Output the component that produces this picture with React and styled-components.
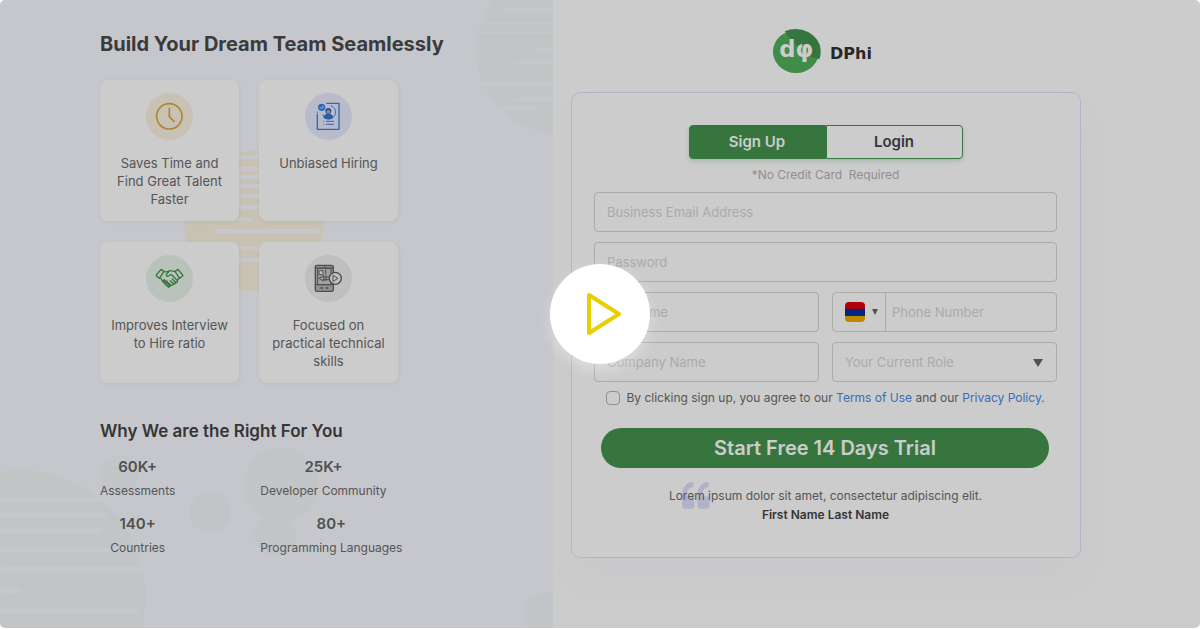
import React from 'react';
import styled, { createGlobalStyle } from 'styled-components';

const Global = createGlobalStyle`
  *, *::before, *::after { box-sizing: border-box; }
  body { margin: 0; background: #fff; font-family: Inter, "Liberation Sans", sans-serif; color: #555; }
  h1, h2, p, dl, dd, dt, ul, fieldset { margin: 0; padding: 0; border: 0; }
  button, input, select { font-family: inherit; margin: 0; }
`;

const Page = styled.div`
  position: relative;
  display: grid;
  grid-template-columns: minmax(0, 553fr) minmax(0, 647fr);
  min-height: calc(100vh - 1px);
  border-radius: 5px;
  overflow: hidden;
  background: #fff;
`;

const Intro = styled.section`
  position: relative;
  overflow: hidden;
  padding: 32px 20px 32px 100px;
  background: #f8f9ff;
`;

const Shapes = styled.svg`
  position: absolute;
  top: 0;
  left: 0;
  width: 553px;
  height: 100%;
`;

const IntroBody = styled.div`
  position: relative;
`;

const Title = styled.h1`
  font-size: 20px;
  line-height: 24px;
  font-weight: 700;
  color: #4a4a4a;
`;

const Subtitle = styled.h2`
  margin-top: 36px;
  font-size: 17px;
  line-height: 24px;
  font-weight: 600;
  color: #444;
`;

const Cards = styled.ul`
  display: grid;
  grid-template-columns: 139px 139px;
  gap: 21px 20px;
  margin-top: 24px;
  list-style: none;
`;

const Card = styled.li`
  display: flex;
  flex-direction: column;
  align-items: center;
  gap: 14px;
  min-height: 141px;
  padding: 13px 8px 12px;
  border-radius: 8px;
  background: #fff;
  box-shadow: 1px 1px 4px rgba(68, 148, 78, 0.1);
  font-size: 13px;
  line-height: 18px;
  text-align: center;
  color: #6c6c6c;
`;

const Badge = styled.svg`
  flex: none;
  width: 47px;
  height: 47px;
  border-radius: 50%;
  background: ${(p) => p.$tint};
`;

const Stats = styled.dl`
  display: grid;
  grid-template-columns: max-content max-content;
  gap: 14px 85px;
  margin-top: 14px;
`;

const Stat = styled.div`
  display: flex;
  flex-direction: column;
  align-items: center;
  justify-self: ${(p) => p.$align};
  gap: 5px;
`;

const StatValue = styled.dd`
  order: -1;
  font-size: 15px;
  line-height: 20px;
  font-weight: 600;
  color: #666;
`;

const StatLabel = styled.dt`
  font-size: 12px;
  line-height: 18px;
  color: #6c6c6c;
`;

const Join = styled.section`
  display: flex;
  flex-direction: column;
  align-items: stretch;
  gap: 18px;
  padding: 28px 119px 32px 18px;
`;

const Brand = styled.div`
  display: flex;
  align-items: center;
  justify-content: center;
  gap: 8px;
  padding-right: 7px;
  font-family: "DejaVu Sans", "Noto Sans", sans-serif;
  font-size: 16px;
  line-height: 24px;
  font-weight: 700;
  color: #333;
`;

const BrandName = styled.span`
  padding-top: 5px;
`;

const Form = styled.form`
  display: flex;
  flex-direction: column;
  align-items: stretch;
  padding: 32px 23px 32px 22px;
  min-height: 466px;
  border: 1px solid #e2e2fb;
  border-radius: 9px;
  box-shadow: 0 20px 40px rgba(120, 120, 220, 0.03);
`;

const Tabs = styled.div`
  display: flex;
  align-self: center;
  width: 274px;
  border-radius: 4px;
  box-shadow: 0 2px 4px rgba(68, 148, 78, 0.25);
`;

const Tab = styled.button`
  flex: 1;
  height: 34px;
  padding: 0;
  border: 1px solid #44944e;
  border-radius: ${(p) => (p.$active ? '4px 0 0 4px' : '0 4px 4px 0')};
  background: ${(p) => (p.$active ? '#44944e' : '#fff')};
  color: ${(p) => (p.$active ? '#fff' : '#444')};
  font-size: 15px;
  line-height: 20px;
  font-weight: 600;
`;

const Note = styled.p`
  margin: 7px 0 8px;
  font-size: 12px;
  line-height: 18px;
  text-align: center;
  white-space: pre;
  color: #b4b4b4;
`;

const Fields = styled.div`
  display: grid;
  grid-template-columns: 1fr 1fr;
  gap: 10px 13px;
`;

const Field = styled.label`
  display: flex;
  position: relative;
  grid-column: ${(p) => (p.$wide ? '1 / -1' : 'auto')};
  height: 40px;
  min-width: 0;
  border: 1px solid #d6d6d6;
  border-radius: 4px;
`;

const Input = styled.input`
  flex: 1;
  min-width: 0;
  padding: 0 ${(p) => (p.$tight ? '6px' : '12px')};
  border: 0;
  background: transparent;
  font-size: 13px;
  color: #444;
  outline: none;
  &::placeholder { color: #d6d6d6; opacity: 1; }
`;

const Select = styled.select`
  flex: 1;
  min-width: 0;
  padding: 0 12px;
  border: 0;
  appearance: none;
  background: transparent;
  font-size: 13px;
  color: #d6d6d6;
  outline: none;
`;

const Caret = styled.span`
  position: absolute;
  top: 16px;
  right: 13px;
  border: 5px solid transparent;
  border-top: 8px solid #666;
  border-bottom: 0;
  pointer-events: none;
`;

const Country = styled.button`
  display: flex;
  align-items: center;
  gap: 7px;
  width: 53px;
  padding: 0 7px 0 12px;
  border: 0;
  border-right: 1px solid #d6d6d6;
  background: transparent;
`;

const Consent = styled.label`
  display: flex;
  align-items: center;
  justify-content: center;
  gap: 6px;
  margin-top: 7px;
  font-size: 12px;
  line-height: 18px;
  color: #6c6c6c;
`;

const Check = styled.input`
  appearance: none;
  width: 14px;
  height: 14px;
  border: 1px solid #b4b4b4;
  border-radius: 4px;
`;

const Link = styled.a`
  color: #4a8ae8;
  text-decoration: none;
`;

const Submit = styled.button`
  height: 40px;
  margin: 21px 8px 0 7px;
  border: 0;
  border-radius: 20px;
  background: #44944e;
  color: #fff;
  font-size: 20px;
  line-height: 24px;
  font-weight: 600;
`;

const Quote = styled.figure`
  margin: 18px 0 0;
  text-align: center;
  font-size: 12px;
  line-height: 19px;
  color: #6c6c6c;
`;

const QuoteText = styled.blockquote`
  position: relative;
  z-index: 0;
  width: max-content;
  margin: 0 auto;
`;

const QuoteMark = styled.svg`
  position: absolute;
  top: -4px;
  left: 13px;
  width: 28px;
  height: 27px;
  z-index: -1;
`;

const Author = styled.figcaption`
  font-weight: 600;
  color: #444;
`;

const Overlay = styled.div`
  position: absolute;
  inset: 0;
  display: flex;
  align-items: center;
  justify-content: center;
  background: rgba(0, 0, 0, 0.2);
`;

const Play = styled.button`
  width: 100px;
  height: 100px;
  padding: 0;
  border: 0;
  border-radius: 50%;
  background: #fff;
  box-shadow: 0 6px 14px rgba(255, 255, 255, 0.35);
`;

const blobs = [
  { id: 'a', cx: 560, cy: 50, r: 84, fill: '#f2f7f7', lines: [[505, 8, 100, 4], [470, 22, 100, 3], [470, 32, 100, 2], [537, 48, 30, 5], [514, 61, 60, 4], [470, 82, 100, 4], [514, 97, 60, 4], [470, 107, 70, 3]] },
  { id: 'b', cx: 20, cy: 596, r: 126, fill: '#f2f7f7', lines: [[0, 497, 110, 5], [0, 512, 107, 6], [0, 528, 102, 6], [0, 548, 150, 5], [0, 566, 150, 6], [0, 588, 20, 6], [0, 608, 139, 6]] },
  { id: 'c', cx: 254, cy: 221, r: 70, fill: '#fbf3e2', lines: [[180, 155, 150, 4], [180, 167, 150, 4], [180, 175, 150, 4], [180, 184, 150, 4], [180, 194, 150, 4], [180, 205, 150, 4], [180, 218, 73, 3], [215, 229, 105, 4], [180, 247, 150, 3], [180, 258, 150, 4]] },
];

const dots = [
  [119, 475, 20],
  [210, 512, 21],
  [281, 485, 38],
  [275, 536, 21],
  [546, 616, 23],
];

function Backdrop() {
  return (
    <Shapes aria-hidden="true">
      {blobs.map((b) => (
        <g key={b.id}>
          <circle cx={b.cx} cy={b.cy} r={b.r} fill={b.fill} />
          {b.lines.map(([x, y, w, h]) => (
            <rect key={y} x={x} y={y} width={w} height={h} rx="2" fill="#f8f9ff" />
          ))}
        </g>
      ))}
      <defs>
        <pattern id="hatch" width="60" height="6" patternUnits="userSpaceOnUse">
          <rect width="60" height="6" fill="#f3f7f9" />
          <rect width="60" height="1" y="2" fill="#f6f8fc" />
        </pattern>
      </defs>
      {dots.map(([cx, cy, r]) => (
        <circle key={cx} cx={cx} cy={cy} r={r} fill="url(#hatch)" />
      ))}
    </Shapes>
  );
}

function ClockIcon() {
  return (
    <Badge $tint="#fbf3e2" viewBox="0 0 141 141" fill="none" stroke="#d9a93f" strokeWidth="5" strokeLinecap="round" strokeLinejoin="round" aria-hidden="true">
      <circle cx="70" cy="70" r="38" />
      <path d="M70 46V71L84 85" />
    </Badge>
  );
}

function ProfileIcon() {
  return (
    <Badge $tint="#e9eafd" viewBox="0 0 141 141" fill="none" stroke="#3b82e6" strokeWidth="4" strokeLinejoin="round" aria-hidden="true">
      <path d="M64 31H102V109H37V62M37 56V59" />
      <path d="M77 38A20 20 0 1 1 53 64" strokeWidth="3" />
      <path d="M55 73C57 64 64 62 70 62S83 64 85 73C78 82 62 82 55 73Z" fill="#2f74d8" stroke="none" />
      <circle cx="70" cy="54" r="9" fill="#2f66c0" stroke="none" />
      <circle cx="70" cy="56" r="5" fill="#f0a890" stroke="none" />
      <circle cx="50" cy="43" r="11" fill="#3b82e6" stroke="none" />
      <path d="M45 43L49 47L56 39" stroke="#e9eafd" strokeWidth="3" />
      <path d="M55 85H58M63 85H87M55 94H58M63 94H87" strokeWidth="3" />
    </Badge>
  );
}

function HandshakeIcon() {
  return (
    <Badge $tint="#e8f4ea" viewBox="0 0 141 141" fill="none" stroke="#44944e" strokeWidth="4" strokeLinecap="round" strokeLinejoin="round" aria-hidden="true">
      <path d="M31 60L45 43L54 49L40 70L31 63Z M110 60L96 43L87 49L101 70L110 63Z" />
      <path d="M55 50C62 52 66 50 70 48C76 45 80 49 86 50" />
      <path d="M44 69L52 82L64 94L68 97L73 93" />
      <path d="M70 48L61 59C61 66 68 65 73 59L78 60L94 77C96 82 91 84 88 81" />
      <path d="M88 81L79 72M88 81C89 87 84 89 81 85L73 77M81 85C82 91 77 93 73 89L68 84M98 70L94 76" />
      <path d="M50 78L55 74L58 78L53 82M58 82L62 78L65 82L59 88M65 88L69 85L71 89L66 94" />
    </Badge>
  );
}

function SkillsIcon() {
  return (
    <Badge $tint="#efefef" viewBox="0 0 141 141" fill="none" stroke="#626262" strokeWidth="4" strokeLinejoin="round" aria-hidden="true">
      <path d="M36 31H80Q85 31 85 36V104Q85 109 80 109H36Q31 109 31 104V36Q31 31 36 31Z" fill="#b4b4b4" />
      <path d="M38 40H78V89H38Z" fill="#c8c8c8" strokeWidth="3" />
      <path d="M31 39H85M31 89H85M60 31V39" strokeWidth="3" />
      <rect x="42" y="47" width="12" height="12" fill="#efefef" strokeWidth="3" />
      <path d="M62 43V59" strokeWidth="3" />
      <path d="M42 70L56 62V78ZM56 66H74M56 74H74M63 62V78" strokeWidth="3" />
      <path d="M46 99H54M62 99H70" />
      <circle cx="91" cy="70" r="18" fill="#efefef" />
      <path d="M84 61V79L99 70Z" strokeWidth="3" />
    </Badge>
  );
}

function Logo() {
  return (
    <svg width="49" height="46" viewBox="0 0 147 138" role="img" aria-label="dphi">
      <ellipse cx="69" cy="71" rx="69" ry="64" fill="#52b05c" />
      <path d="M35 10Q72 -6 107 13Q145 36 143 71Q143 84 139 94L111 85Q65 57 35 10Z" fill="#44944e" />
      <text x="70" y="88" textAnchor="middle" fontFamily="DejaVu Sans, sans-serif" fontWeight="700" fontSize="68" fill="#fff">dφ</text>
    </svg>
  );
}

function Flag() {
  return (
    <svg width="20" height="20" viewBox="0 0 20 20" aria-hidden="true">
      <clipPath id="flag"><rect width="20" height="20" rx="4" /></clipPath>
      <g clipPath="url(#flag)">
        <rect width="20" height="7" fill="#d90012" />
        <rect y="7" width="20" height="7" fill="#0033a0" />
        <rect y="14" width="20" height="6" fill="#f2a800" />
      </g>
    </svg>
  );
}

const benefits = [
  [ClockIcon, 'Saves Time and Find Great Talent Faster'],
  [ProfileIcon, 'Unbiased Hiring'],
  [HandshakeIcon, 'Improves Interview to Hire ratio'],
  [SkillsIcon, 'Focused on practical technical skills'],
];

const stats = [
  ['60K+', 'Assessments'],
  ['25K+', 'Developer Community'],
  ['140+', 'Countries'],
  ['80+', 'Programming Languages'],
];

export default function App() {
  return (
    <>
      <Global />
      <Page>
        <Intro>
          <Backdrop />
          <IntroBody>
            <Title>Build Your Dream Team Seamlessly</Title>
            <Cards>
              {benefits.map(([Icon, text]) => (
                <Card key={text}>
                  <Icon />
                  <span>{text}</span>
                </Card>
              ))}
            </Cards>
            <Subtitle>Why We are the Right For You</Subtitle>
            <Stats>
              {stats.map(([value, label], i) => (
                <Stat key={label} $align={i % 2 ? 'start' : 'center'}>
                  <StatLabel>{label}</StatLabel>
                  <StatValue>{value}</StatValue>
                </Stat>
              ))}
            </Stats>
          </IntroBody>
        </Intro>

        <Join>
          <Brand>
            <Logo />
            <BrandName>DPhi</BrandName>
          </Brand>
          <Form onSubmit={(e) => e.preventDefault()}>
            <Tabs>
              <Tab type="button" $active>Sign Up</Tab>
              <Tab type="button">Login</Tab>
            </Tabs>
            <Note>{'*No Credit Card  Required'}</Note>
            <Fields>
              <Field $wide><Input type="email" aria-label="Business Email Address" placeholder="Business Email Address" /></Field>
              <Field $wide><Input type="password" aria-label="Password" placeholder="Password" /></Field>
              <Field><Input type="text" aria-label="Full Name" placeholder="Full Name" /></Field>
              <Field as="div">
                <Country type="button" aria-label="Country code">
                  <Flag />
                  <svg width="6" height="6" viewBox="0 0 6 6" aria-hidden="true"><path d="M0 0H6L3 6Z" fill="#666" /></svg>
                </Country>
                <Input $tight type="tel" aria-label="Phone Number" placeholder="Phone Number" />
              </Field>
              <Field><Input type="text" aria-label="Company Name" placeholder="Company Name" /></Field>
              <Field>
                <Select aria-label="Your Current Role" defaultValue="">
                  <option value="">Your Current Role</option>
                </Select>
                <Caret />
              </Field>
            </Fields>
            <Consent>
              <Check type="checkbox" />
              <span>
                By clicking sign up, you agree to our <Link href="#terms">Terms of Use</Link> and our{' '}
                <Link href="#privacy">Privacy Policy</Link>.
              </span>
            </Consent>
            <Submit type="submit">Start Free 14 Days Trial</Submit>
            <Quote>
              <QuoteText>
                <QuoteMark viewBox="0 0 84 81" fill="#dedffb" aria-hidden="true">
                  <path d="M30 0C12 2 0 18 0 40V70Q0 80 10 80H27Q37 80 37 70V53Q37 43 27 43H15C15 26 20 19 30 16Q35 15 35 8Q35 0 30 0Z" />
                  <path d="M76 0C58 2 46 18 46 40V70Q46 80 56 80H73Q83 80 83 70V53Q83 43 73 43H61C61 26 66 19 76 16Q81 15 81 8Q81 0 76 0Z" />
                </QuoteMark>
                Lorem ipsum dolor sit amet, consectetur adipiscing elit.
              </QuoteText>
              <Author>First Name Last Name</Author>
            </Quote>
          </Form>
        </Join>

        <Overlay>
          <Play type="button" aria-label="Play video">
            <svg width="100" height="100" viewBox="0 0 100 100" fill="none" aria-hidden="true">
              <path d="M39 31V69L69 50Z" stroke="#e6d000" strokeWidth="4" strokeLinejoin="round" />
            </svg>
          </Play>
        </Overlay>
      </Page>
    </>
  );
}
